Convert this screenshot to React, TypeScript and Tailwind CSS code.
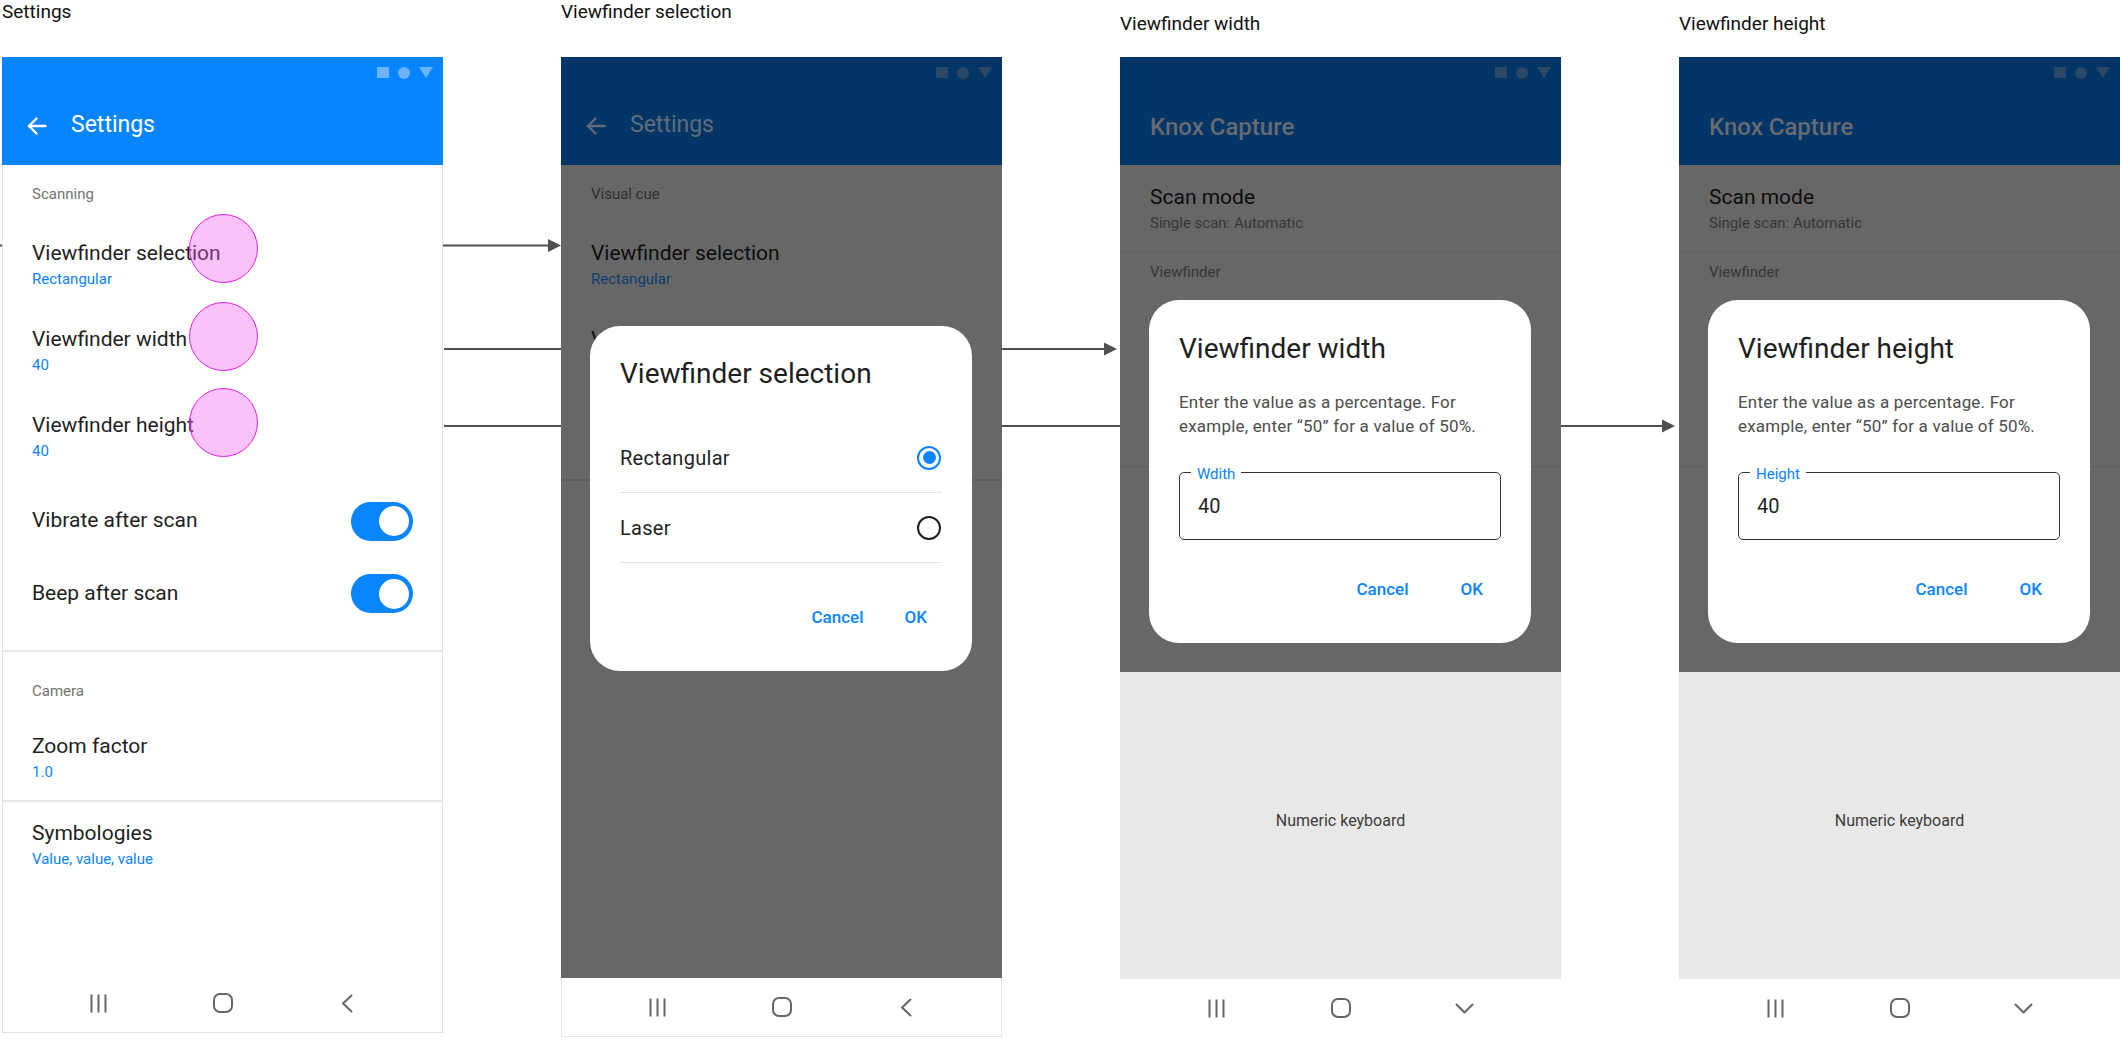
import React from 'react'

function StatusIcons({ dim }: { dim?: boolean }) {
  const fill = dim ? '#2b4866' : '#6cb4ff'
  return (
    <div className="h-[31px] flex justify-end items-start pt-[10px] pr-[10px] gap-[9px]">
      <span className={dim ? 'w-[12px] h-[11px] bg-[#2b4866]' : 'w-[12px] h-[11px] bg-[#6cb4ff]'} />
      <span className={dim ? 'w-[12px] h-[12px] rounded-full bg-[#2b4866]' : 'w-[12px] h-[12px] rounded-full bg-[#6cb4ff]'} />
      <svg width="14" height="11" viewBox="0 0 14 11">
        <polygon points="0,0 14,0 7,11" fill={fill} />
      </svg>
    </div>
  )
}

function BackArrow({ color }: { color: string }) {
  return (
    <svg width="20" height="18" viewBox="0 0 20 18" fill="none" stroke={color} strokeWidth="2.4" strokeLinecap="round" strokeLinejoin="round">
      <path d="M18.5 9H2" />
      <path d="M9.5 1.5L2 9l7.5 7.5" />
    </svg>
  )
}

function SettingsHeader({ dim }: { dim?: boolean }) {
  return (
    <div className={dim ? 'h-[108px] shrink-0 flex flex-col bg-[#033566]' : 'h-[108px] shrink-0 flex flex-col bg-[#0784ff]'}>
      <StatusIcons dim={dim} />
      <div className="flex-1 flex items-center pl-[25px] pb-[2px]">
        <BackArrow color={dim ? '#626c7a' : '#ffffff'} />
        <span className={dim ? 'ml-[24px] text-[23px] text-[#626c7a]' : 'ml-[24px] text-[23px] text-white'}>Settings</span>
      </div>
    </div>
  )
}

function KnoxHeader() {
  return (
    <div className="h-[108px] shrink-0 flex flex-col bg-[#033566]">
      <StatusIcons dim />
      <div className="flex-1 flex items-center pl-[30px]">
        <span className="text-[24px] font-medium text-[#666a72]">Knox Capture</span>
      </div>
    </div>
  )
}

function NavBar({ down }: { down?: boolean }) {
  return (
    <div className="h-[58px] shrink-0 flex items-center justify-center">
      <div className="w-[124px] flex justify-center">
        <svg width="17" height="19" viewBox="0 0 17 19" stroke="#666666" strokeWidth="2">
          <path d="M1.5 0.5v18M8.5 0.5v18M15.5 0.5v18" />
        </svg>
      </div>
      <div className="w-[124px] flex justify-center">
        <svg width="20" height="20" viewBox="0 0 20 20" fill="none" stroke="#666666" strokeWidth="2">
          <rect x="1" y="1" width="18" height="18" rx="6" />
        </svg>
      </div>
      <div className="w-[124px] flex justify-center">
        {down ? (
          <svg width="19" height="11" viewBox="0 0 19 11" fill="none" stroke="#666666" strokeWidth="2" strokeLinecap="round" strokeLinejoin="round">
            <polyline points="1.5,1.5 9.5,9.5 17.5,1.5" />
          </svg>
        ) : (
          <svg width="12" height="19" viewBox="0 0 12 19" fill="none" stroke="#666666" strokeWidth="2" strokeLinecap="round" strokeLinejoin="round">
            <polyline points="10.5,1.5 2,9.5 10.5,17.5" />
          </svg>
        )}
      </div>
    </div>
  )
}

function Toggle() {
  return (
    <span className="w-[62px] h-[39px] rounded-full bg-[#0a84ff] flex items-center justify-end pr-[4px]">
      <span className="w-[30px] h-[30px] rounded-full bg-white" />
    </span>
  )
}

function Radio({ on }: { on?: boolean }) {
  if (on) {
    return (
      <span className="mr-[1px] w-[24px] h-[24px] rounded-full border-[2.5px] border-[#0a84ff] flex items-center justify-center">
        <span className="w-[13px] h-[13px] rounded-full bg-[#0a84ff]" />
      </span>
    )
  }
  return <span className="mr-[1px] w-[24px] h-[24px] rounded-full border-2 border-[#1f1f1f]" />
}

function TouchDot({ top }: { top: string }) {
  return <span className={`absolute left-[187px] ${top} w-[69px] h-[69px] rounded-full bg-[#f050f0]/35 border border-[#e61ee6]`} />
}

function SettingsPanel() {
  return (
    <div className="relative w-[441px] h-[976px] flex flex-col">
      <SettingsHeader />
      <div className="flex-1 flex flex-col bg-white border-x border-b border-[#e3e3e3]">
        <div className="h-[58px] flex items-center pl-[29px] text-[15px] text-[#727272]">Scanning</div>
        {[
          ['Viewfinder selection', 'Rectangular'],
          ['Viewfinder width', '40'],
          ['Viewfinder height', '40'],
        ].map(([t, s]) => (
          <div key={t} className="h-[86px] flex flex-col justify-center pl-[29px]">
            <div className="text-[21px] leading-[26px] text-[#1f1f1f]">{t}</div>
            <div className="text-[15px] leading-[26px] text-[#0a84ff]">{s}</div>
          </div>
        ))}
        <div className="mt-[3px] h-[74px] flex items-center justify-between px-[29px]">
          <span className="text-[21px] text-[#1f1f1f]">Vibrate after scan</span>
          <Toggle />
        </div>
        <div className="h-[71px] flex items-center justify-between px-[29px]">
          <span className="text-[21px] text-[#1f1f1f]">Beep after scan</span>
          <Toggle />
        </div>
        <div className="h-[21px]" />
        <div className="h-[2px] bg-[#e8e8e8]" />
        <div className="h-[78px] flex items-center pl-[29px] text-[15px] text-[#727272]">Camera</div>
        <div className="h-[70px] pt-[3px] pl-[29px]">
          <div className="text-[21px] leading-[26px] text-[#1f1f1f]">Zoom factor</div>
          <div className="text-[15px] leading-[26px] text-[#0a84ff]">1.0</div>
        </div>
        <div className="h-[2px] bg-[#e8e8e8]" />
        <div className="pt-[18px] pl-[29px]">
          <div className="text-[21px] leading-[26px] text-[#1f1f1f]">Symbologies</div>
          <div className="text-[15px] leading-[26px] text-[#0a84ff]">Value, value, value</div>
        </div>
        <div className="flex-1" />
        <NavBar />
      </div>
      <TouchDot top="top-[157px]" />
      <TouchDot top="top-[245px]" />
      <TouchDot top="top-[331px]" />
    </div>
  )
}

function SelectionPanel() {
  return (
    <div className="relative w-[441px] h-[980px] flex flex-col">
      <SettingsHeader dim />
      <div className="flex-1 flex flex-col bg-[#676767]">
        <div className="h-[58px] flex items-center pl-[30px] text-[15px] text-[#2e2e2e]">Visual cue</div>
        {[
          ['Viewfinder selection', 'Rectangular', 'h-[86px]'],
          ['Viewfinder width', '40', 'h-[86px]'],
          ['Viewfinder height', '40', 'h-[84px]'],
        ].map(([t, s, h]) => (
          <div key={t} className={`${h} flex flex-col justify-center pl-[30px]`}>
            <div className="text-[21px] leading-[26px] text-[#0d0d0d]">{t}</div>
            <div className="text-[15px] leading-[26px] text-[#0d3d70]">{s}</div>
          </div>
        ))}
        <div className="h-[2px] bg-[#5d5d5d]" />
      </div>
      <div className="bg-white border-x border-b border-[#e3e3e3]">
        <NavBar />
      </div>

      <div className="absolute left-[29px] top-[269px] w-[382px] h-[345px] bg-white rounded-[30px] px-[30px] pt-[31px]">
        <div className="text-[28px] leading-[34px] text-[#1f1f1f]">Viewfinder selection</div>
        <div className="mt-[32px]">
          <div className="h-[70px] flex items-center justify-between border-b-[1.5px] border-[#e3e3e3] text-[20px] tracking-[0.3px] text-[#1f1f1f]">
            <span>Rectangular</span>
            <Radio on />
          </div>
          <div className="h-[70px] flex items-center justify-between border-b-[1.5px] border-[#e3e3e3] text-[20px] tracking-[0.3px] text-[#1f1f1f]">
            <span>Laser</span>
            <Radio />
          </div>
        </div>
        <div className="mt-[35px] h-[40px] flex items-center justify-end gap-[41px] pr-[15px] text-[17px] font-medium text-[#0a84ff]">
          <span>Cancel</span>
          <span>OK</span>
        </div>
      </div>
    </div>
  )
}

function InputPanel({ title, label, item }: { title: string; label: string; item: string }) {
  return (
    <div className="relative w-[441px] h-[980px] flex flex-col">
      <KnoxHeader />
      <div className="h-[507px] flex flex-col bg-[#676767]">
        <div className="h-[87px] pt-[19px] pl-[30px] border-b border-[#5e5e5e]">
          <div className="text-[21px] leading-[26px] text-[#0d0d0d]">Scan mode</div>
          <div className="text-[15px] leading-[26px] text-[#363636]">Single scan: Automatic</div>
        </div>
        <div className="h-[215px] pt-[10px] pl-[30px] border-b border-[#5e5e5e]">
          <div className="text-[15px] leading-[20px] text-[#363636]">Viewfinder</div>
          <div className="mt-[31px] text-[21px] leading-[26px] text-[#0d0d0d]">{item}</div>
          <div className="text-[15px] leading-[26px] text-[#0d3d70]">40</div>
        </div>
      </div>
      <div className="h-[307px] flex items-center justify-center pb-[9px] bg-[#e8e8e8] text-[16px] text-[#3d3d3d]">
        Numeric keyboard
      </div>
      <div className="bg-white">
        <NavBar down />
      </div>

      <div className="absolute left-[29px] top-[243px] w-[382px] h-[343px] bg-white rounded-[30px] px-[30px] pt-[32px]">
        <div className="text-[28px] leading-[34px] text-[#1f1f1f]">{title}</div>
        <p className="mt-[24px] text-[17px] leading-[24px] tracking-[0.2px] text-[#4d4d4d]">
          Enter the value as a percentage. For
          <br />
          example, enter “50” for a value of 50%.
        </p>
        <div className="relative mt-[34px] h-[68px] border-[1.5px] border-[#333333] rounded-[5px] flex items-center pl-[18px] text-[20px] text-[#1f1f1f]">
          40
          <span className="absolute left-[11px] -top-[8px] bg-white px-[6px] text-[15px] leading-[18px] text-[#0a84ff]">{label}</span>
        </div>
        <div className="mt-[30px] h-[40px] flex items-center justify-end gap-[52px] pr-[18px] text-[17px] font-medium text-[#0a84ff]">
          <span>Cancel</span>
          <span>OK</span>
        </div>
      </div>
    </div>
  )
}

function Column({ label, low, children }: { label: string; low?: boolean; children: React.ReactNode }) {
  return (
    <div className="w-[441px] flex flex-col shrink-0">
      <div className={low ? 'h-[57px] pt-[12px] text-[19px] leading-[24px] text-[#111111]' : 'h-[57px] text-[19px] leading-[24px] text-[#111111]'}>
        {label}
      </div>
      {children}
    </div>
  )
}

export default function App() {
  return (
    <div className="relative w-[2122px] h-[1051px] overflow-hidden bg-white [font-family:Roboto,sans-serif]">
      <svg className="absolute left-0 top-0" width="2122" height="1051" viewBox="0 0 2122 1051">
        <g stroke="#505050" strokeWidth="2">
          <line x1="0" y1="245.5" x2="550" y2="245.5" />
          <line x1="444" y1="349" x2="1106" y2="349" />
          <line x1="444" y1="426" x2="1664" y2="426" />
        </g>
        <g fill="#505050">
          <polygon points="548,239 561,245.5 548,252" />
          <polygon points="1104,342.5 1117,349 1104,355.5" />
          <polygon points="1662,419.5 1675,426 1662,432.5" />
        </g>
      </svg>

      <div className="relative z-10 flex gap-[118px] pl-[2px]">
        <Column label="Settings">
          <SettingsPanel />
        </Column>
        <Column label="Viewfinder selection">
          <SelectionPanel />
        </Column>
        <Column label="Viewfinder width" low>
          <InputPanel title="Viewfinder width" label="Wdith" item="Viewfinder width" />
        </Column>
        <Column label="Viewfinder height" low>
          <InputPanel title="Viewfinder height" label="Height" item="Viewfinder height" />
        </Column>
      </div>
    </div>
  )
}
